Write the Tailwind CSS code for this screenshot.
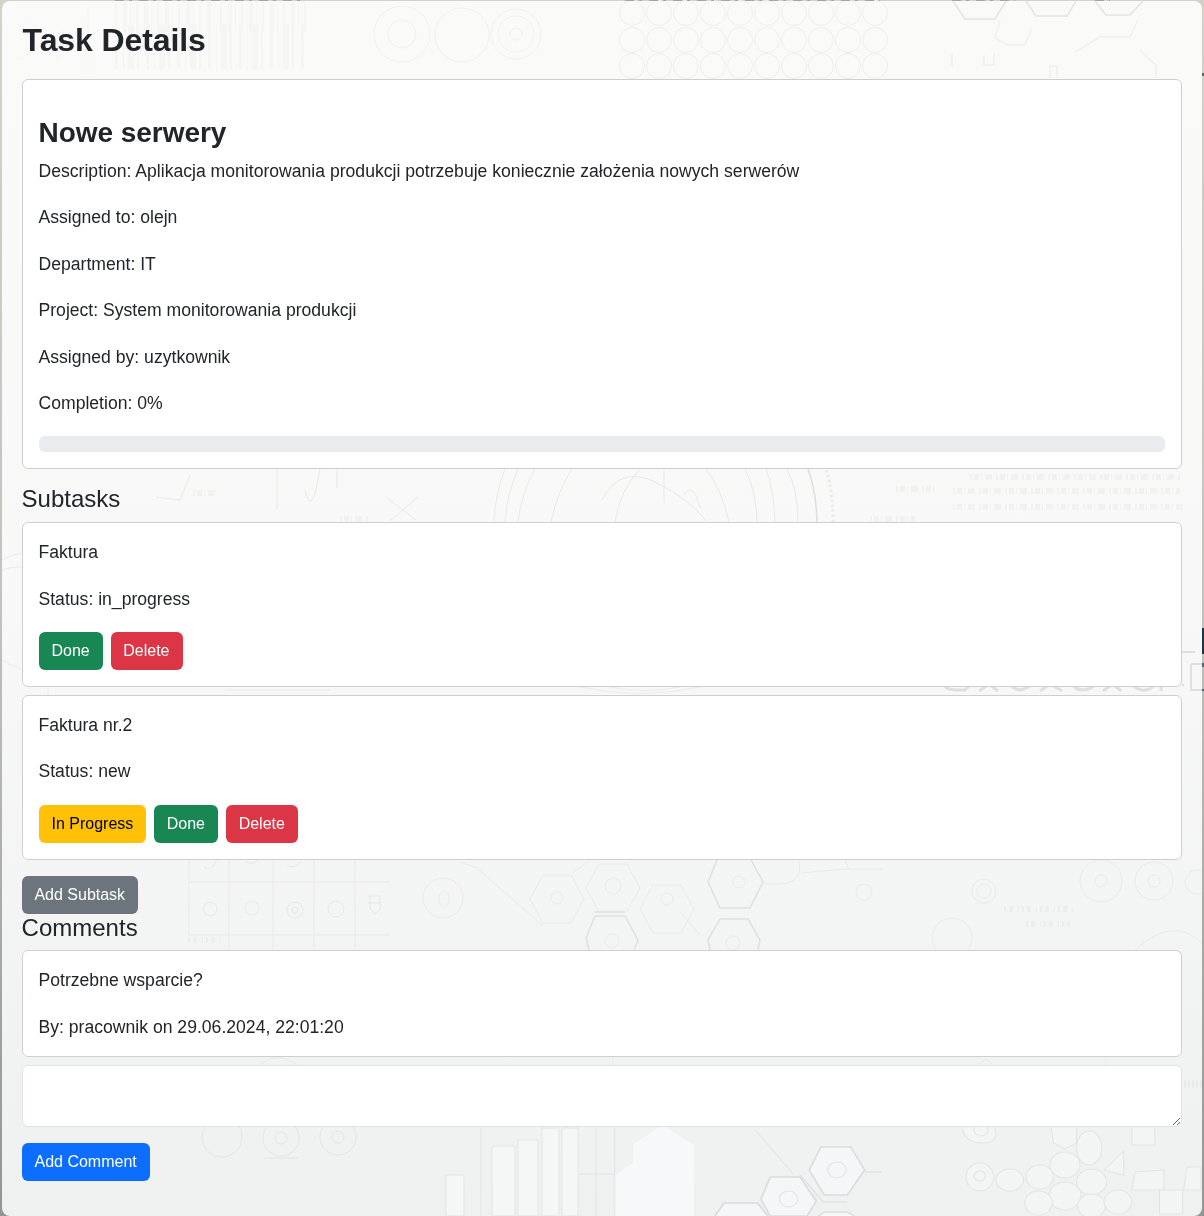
<!DOCTYPE html>
<html lang="pl">
<head>
<meta charset="utf-8">
<title>Task Details</title>
<script src="https://cdn.jsdelivr.net/npm/@tailwindcss/browser@4"></script>
</head>
<body class="h-[1216px] overflow-hidden bg-linear-to-b from-[#d4d2c8] via-[#c2c2be] to-[#929594] px-[2px] pt-px font-['Liberation_Sans',Arial,sans-serif] text-[#212529]">
<main class="relative h-[1215px] rounded-lg bg-linear-to-b from-[#fafaf8] via-[#f8f8f8] via-50% to-[#eff0f0] px-5 pt-5">
  <!-- faint blueprint decoration -->
  <svg class="pointer-events-none absolute -left-[2px] -top-px h-[1216px] w-[1204px]" viewBox="0 0 1204 1216" fill="none" stroke="#e9e9e8">
    <defs>
      <filter id="soft"><feGaussianBlur stdDeviation="0.7"/></filter>
      <path id="hex" d="M-14-24H14L27 0 14 24H-14L-27 0Z"/>
      <g id="ring"><circle r="18"/><circle r="6"/></g>
      <g id="row"><circle r="12.5"/><circle cx="27" r="12.5"/><circle cx="54" r="12.5"/><circle cx="81" r="12.5"/><circle cx="108" r="12.5"/><circle cx="135" r="12.5"/><circle cx="162" r="12.5"/><circle cx="189" r="12.5"/><circle cx="216" r="12.5"/><circle cx="243" r="12.5"/></g>
    </defs>
    <g filter="url(#soft)">
      <g stroke="#f5f5f4">
        <path stroke-width="45" stroke-dasharray="3 5 1 4 6 3 2 7" d="M115 47H306" />
        <path stroke-width="30" stroke-dasharray="2 6 4 3 1 5" d="M115 17H306" />
        <path d="M20 60L65 30M88 5V79M30 20L60 60"/>
        <g stroke="#f0f0ee"><circle cx="516" cy="34" r="18"/><circle cx="516" cy="34" r="25"/><circle cx="516" cy="34" r="6"/><circle cx="402" cy="34" r="28"/><circle cx="402" cy="34" r="14"/><circle cx="462" cy="35" r="27"/></g>
        <g stroke="#eeeeed"><use href="#row" x="632" y="13"/><use href="#row" x="632" y="40"/><use href="#row" x="632" y="66"/></g>
      </g>
      <g stroke="#e4e4e2" stroke-width="1.5">
        <path d="M953 1L965 19H995L1006 1M1026 1L1036 16H1067L1076 1M1095 1L1106 15H1130L1143 1"/>
        <path stroke="#f0f0ee" d="M1000 20L995 38L1008 45H1025L1032 28M1075 52L1100 37H1130L1138 20M952 54V66M984 55V65H994V54M1050 78V66H1057V78M1140 50L1156 65V78"/>
      </g>
      <g stroke="#e8e8e7">
        <path d="M494 522A174 174 0 0 1 505 469M505 522A160 160 0 0 1 518 469M518 522Q522 490 535 469M551 522Q558 490 572 469M602 500Q620 465 655 482T707 522M615 522Q620 490 640 469M729 522Q722 490 706 469M757 522Q756 490 745 469M775 522Q774 490 766 469M798 522Q798 490 787 469"/>
        <path stroke-width="1.5" stroke="#dededd" d="M817 522Q816 490 808 469"/><path stroke-dasharray="2 3" stroke-width="3" d="M833 522Q833 492 826 469"/>
        <path d="M664 469V503M684 495Q693 480 700 508M387 498L416 520M418 497L390 521M156 497L180 500 190 475M277 469V510M337 469V488M305 490Q312 520 320 469"/>
        <path stroke="#f1f1f0" stroke-width="6" stroke-dasharray="2 2 5 2 1 3 7 4" d="M896 489H935M970 477H1180M953 491H1180M953 507H1183M870 519H915M193 493H219M340 519H370"/>
      </g>
      <g stroke="#eaeae9">
        <path d="M2 560A57 57 0 0 1 22 553M2 570A44 44 0 0 1 22 567M2 660Q10 666 22 669"/>
        <path stroke="#dedfdf" stroke-width="3" d="M945 682Q942 690 958 690H965L969 686M979 691L989 684 998 691M1010 684Q1018 695 1031 685M1040 691L1050 684 1062 691M1072 684Q1080 695 1094 686M1103 691L1113 684 1121 691M1132 685Q1146 696 1155 684M1161 691V686"/>
        <path stroke="#dedfdf" stroke-width="2" d="M1182 652H1195M1182 685H1184M1191 664H1202M1191 664V690H1202"/>
        <path d="M580 687Q640 700 700 687M610 687Q645 694 680 687M48 687V695M225 690H330"/>
      </g>
      <g>
        <path d="M189 882H390M189 935H390M189 860V935M229 860V950M273 860V950M314 860V950M355 860V950"/>
        <g stroke="#e6e6e6"><circle cx="210" cy="909" r="7"/><circle cx="252" cy="908" r="7"/><circle cx="295" cy="910" r="8"/><circle cx="295" cy="910" r="3"/><circle cx="336" cy="909" r="8"/><path d="M368 896H380V909L375 914 370 909V896M368 903H380M204 867Q211 872 217 860M245 861Q252 866 258 860M287 865Q295 870 301 861"/></g>
        <circle cx="443" cy="898" r="20"/><ellipse cx="444" cy="899" rx="5" ry="8"/>
        <path d="M460 862L477 868 543 926M573 873L590 860M680 912L700 935M764 884H780Q803 883 799 862"/>
        <use href="#hex" x="557" y="899"/><use href="#hex" x="613" y="888"/><use href="#hex" x="667" y="909"/>
        <path stroke-width="1.5" stroke="#dfdfdf" d="M717 860L708 882 720 908H750L763 882 751 860M594 912H625M720 919H748L760 940 758 950M720 919L708 940 710 950M595 916H625L638 940 634 950M595 916L586 938 589 950"/>
        <circle cx="557" cy="898" r="6"/><circle cx="613" cy="886" r="8"/><circle cx="667" cy="899" r="6"/><circle cx="739" cy="882" r="6"/><circle cx="733" cy="943" r="7"/><circle cx="612" cy="941" r="7"/>
        <path d="M802 873L845 869H883M845 860L849 869M1135 950Q1173 915 1202 943"/>
        <circle cx="864" cy="892" r="8"/><circle cx="984" cy="891" r="12"/><circle cx="984" cy="891" r="7"/><circle cx="1101" cy="881" r="21"/><circle cx="1101" cy="881" r="6"/><circle cx="1154" cy="881" r="19"/><circle cx="1154" cy="881" r="6"/><path d="M1202 871A12 12 0 1 0 1202 893"/><circle cx="952" cy="938" r="20"/>
        <path stroke-width="6" stroke="#ededec" stroke-dasharray="2 3 4 5 1 3" d="M1004 909H1074M1026 924H1070M188 940H222"/>
      </g>
      <g stroke="#e3e4e5">
        <circle cx="222" cy="1137" r="20"/><use href="#ring" x="281" y="1138"/><use href="#ring" x="338" y="1137"/><path d="M264 1158H298"/>
        <path fill="#f5f6f6" d="M446 1216V1175H464V1216ZM492 1216V1146H515V1216ZM518 1216V1140H538V1216ZM542 1216V1128H559V1216ZM562 1216V1128H578V1216Z"/>
        <path d="M481 1216V1128M596 1216V1128M578 1174H614"/>
        <path stroke="none" fill="#f7f8fa" d="M615 1216V1175L633 1163V1145L662 1125 694 1145V1216Z"/>
        <g transform="translate(-91.3 0) scale(1.1517 1)">
          <path d="M735 1130L768 1174M613 1128V1216"/>
          <path fill="#f5f6f7" stroke="#dadddd" stroke-width="1.5" d="M792 1147H818L830 1170 815 1195H795L782 1170ZM748 1177H774L788 1201 780 1216H748L740 1199ZM700 1216L708 1203H737L746 1216M790 1216L795 1212H815L821 1216"/>
          <path stroke="#dadddd" d="M830 1172H845M774 1175L794 1202H815"/>
          <circle cx="806" cy="1170" r="8"/><circle cx="764" cy="1199" r="8"/>
          <g fill="#f3f4f4"><path d="M915 1128Q917 1143 932 1143T943 1128"/><circle cx="931" cy="1130" r="6"/><ellipse cx="930" cy="1177" rx="12" ry="14"/><circle cx="930" cy="1176" r="5"/><ellipse cx="956" cy="1180" rx="12" ry="11"/><circle cx="982" cy="1177" r="12"/><circle cx="1004" cy="1165" r="13"/><circle cx="1027" cy="1182" r="13"/><circle cx="1004" cy="1196" r="14"/><circle cx="981" cy="1203" r="12"/><circle cx="1027" cy="1206" r="12"/><circle cx="1050" cy="1202" r="12"/><ellipse cx="1025" cy="1148" rx="11" ry="17"/><path d="M992 1128L994 1143 1004 1149 1014 1143V1128M1038 1170L1055 1151V1175ZM1062 1128V1145H1082V1128M1065 1172L1090 1170V1190H1062ZM1086 1190H1106V1214H1086ZM1110 1167H1122V1190H1107Z"/></g>
        </g>
      </g>
      <g stroke="#e8e9e9"><path d="M260 1064Q278 1050 297 1065M613 1057V1065M979 1064L986 1059 992 1064M1106 1057V1065"/><path stroke-width="7" stroke-dasharray="2 2" d="M1184 1084H1202"/></g>
    </g>
    <g stroke-width="2"><path stroke="#1e3442" d="M1203 628V654"/><path stroke="#59636a" d="M1203 663V667M1203 689V691M1203 73V76"/></g>
    <path stroke="#a5a5a1" d="M115 .5H306M625 .5H880M952 .5H1015M1095 .5H1110" stroke-dasharray="9 5 3 7"/>
  </svg>

  <div class="relative">
    <h1 class="mb-5 pl-[0.6px] text-[32px] leading-[38.4px] font-bold tracking-[-0.1px]">Task Details</h1>

    <section class="mb-4 rounded-md border border-[#cfcfcf] bg-white p-4">
      <h2 class="mt-5 mb-2 -ml-[0.4px] text-[28px] leading-[33.6px] font-bold tracking-[-0.05px]">Nowe serwery</h2>
      <div class="mb-5 -ml-[0.5px] flex flex-col gap-5 text-[17.6px] leading-[26.4px]">
        <p>Description: Aplikacja monitorowania produkcji potrzebuje koniecznie założenia nowych serwerów</p>
        <p>Assigned to: olejn</p>
        <p>Department: IT</p>
        <p>Project: System monitorowania produkcji</p>
        <p>Assigned by: uzytkownik</p>
        <p>Completion: 0%</p>
      </div>
      <div class="h-4 rounded-md bg-[#e9ecef]"></div>
    </section>

    <h4 class="mb-2 -ml-[0.4px] text-2xl leading-[28.8px]">Subtasks</h4>
    <section class="mb-2 rounded-md border border-[#cfcfcf] bg-white p-4">
      <div class="mb-5 -ml-[0.5px] flex flex-col gap-5 text-[17.6px] leading-[26.4px]">
        <p>Faktura</p>
        <p>Status: in_progress</p>
      </div>
      <div class="flex gap-2 text-white">
        <button class="rounded-md bg-[#198754] py-[7px] pr-[13px] pl-[12.5px]">Done</button>
        <button class="rounded-md bg-[#dc3545] py-[7px] pr-[13px] pl-[12.5px]">Delete</button>
      </div>
    </section>
    <section class="mb-4 rounded-md border border-[#cfcfcf] bg-white p-4">
      <div class="mb-5 -ml-[0.5px] flex flex-col gap-5 text-[17.6px] leading-[26.4px]">
        <p>Faktura nr.2</p>
        <p>Status: new</p>
      </div>
      <div class="flex gap-2 text-white">
        <button class="rounded-md bg-[#ffc107] py-[7px] pr-[12.6px] pl-[12.5px] text-black">In Progress</button>
        <button class="rounded-md bg-[#198754] py-[7px] pr-[13.2px] pl-[12.8px]">Done</button>
        <button class="rounded-md bg-[#dc3545] py-[7px] pr-[13px] pl-[12.5px]">Delete</button>
      </div>
    </section>
    <button class="block rounded-md bg-[#6c757d] py-[7px] pr-[12.5px] pl-[12.4px] text-white">Add Subtask</button>

    <h4 class="mb-[7.5px] -ml-[0.4px] text-2xl leading-[28.8px]">Comments</h4>
    <section class="mb-2 flex flex-col gap-5 rounded-md border border-[#cfcfcf] bg-white p-4 text-[17.6px] leading-[26.4px]">
      <p class="-ml-[0.5px]">Potrzebne wsparcie?</p>
      <p class="-ml-[0.5px]">By: pracownik on 29.06.2024, 22:01:20</p>
    </section>
    <textarea class="mt-[8.5px] mb-4 block h-[62px] w-full resize-y rounded-md border border-[#dee2e6] bg-white px-3 py-1.5"></textarea>
    <button class="block rounded-md bg-[#0d6efd] py-[7px] pr-[13px] pl-[12.5px] text-white">Add Comment</button>
  </div>
</main>
</body>
</html>
